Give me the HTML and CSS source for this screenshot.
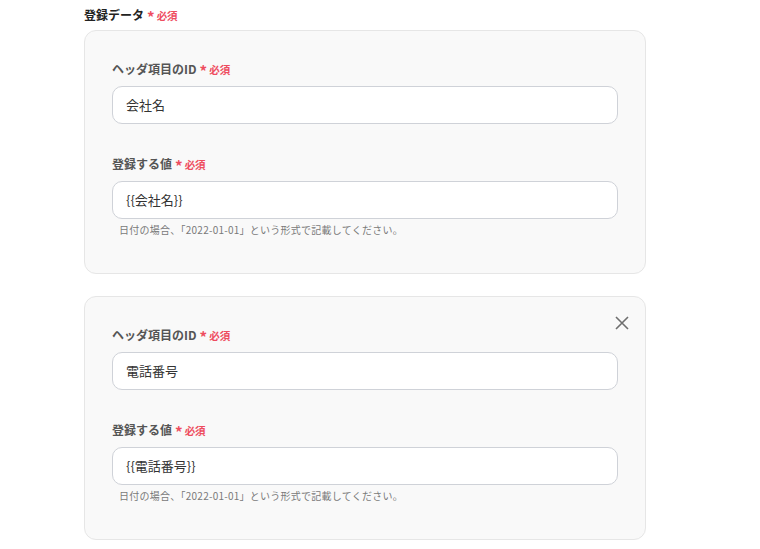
FILE: index.html
```html
<!DOCTYPE html>
<html lang="ja">
<head>
<meta charset="utf-8">
<link rel="stylesheet" href="styles.css">
</head>
<body>
<div class="page">
  <div class="title">登録データ<span class="req"><span class="ast">*</span>必須</span></div>

  <div class="card">
    <div class="field">
      <div class="label">ヘッダ項目のID<span class="req"><span class="ast">*</span>必須</span></div>
      <div class="input">会社名</div>
    </div>
    <div class="field">
      <div class="label">登録する値<span class="req"><span class="ast">*</span>必須</span></div>
      <div class="input">{{会社名}}</div>
      <div class="hint">日付の場合、「2022-01-01」という形式で記載してください。</div>
    </div>
  </div>

  <div class="card">
    <button class="close" aria-label="削除">
      <svg width="14" height="14" viewBox="0 0 14 14"><path d="M1 1L13 13M13 1L1 13" stroke="#6f6f6f" stroke-width="1.6" fill="none"/></svg>
    </button>
    <div class="field">
      <div class="label">ヘッダ項目のID<span class="req"><span class="ast">*</span>必須</span></div>
      <div class="input">電話番号</div>
    </div>
    <div class="field">
      <div class="label">登録する値<span class="req"><span class="ast">*</span>必須</span></div>
      <div class="input">{{電話番号}}</div>
      <div class="hint">日付の場合、「2022-01-01」という形式で記載してください。</div>
    </div>
  </div>
</div>
</body>
</html>
```

FILE: styles.css
```css
* { box-sizing: border-box; }
html, body { margin: 0; padding: 0; background: #fff; }
body {
  font-family: "Noto Sans CJK JP", "Noto Sans", sans-serif;
  color: #333;
}
.page {
  padding: 5px 0 0 84px;
  width: 646px;
}
.title {
  font-size: 12px;
  font-weight: bold;
  line-height: 20px;
  height: 20px;
  margin-bottom: 5px;
  color: #222;
}
.req {
  color: #ee4d5f;
  font-size: 10.5px;
  font-weight: bold;
  margin-left: 3px;
}
.ast {
  display: inline-block;
  font-size: 15px;
  line-height: 10px;
  margin-right: 2px;
  position: relative;
  top: 3px;
}
.card {
  position: relative;
  background: #f9f9f9;
  border: 1px solid #e6e6e6;
  border-radius: 12px;
  padding: 29px 27px 0 27px;
  height: 244px;
  margin-bottom: 22px;
}
.field + .field { margin-top: 31px; }
.label {
  font-size: 12px;
  font-weight: bold;
  line-height: 18px;
  height: 18px;
  color: #555;
  margin-bottom: 8px;
}
.input {
  height: 38px;
  background: #fff;
  border: 1px solid #cfd2d8;
  border-radius: 10px;
  padding: 0 13px;
  font-size: 13px;
  line-height: 36px;
  color: #333;
}
.hint {
  margin-top: 4px;
  padding-left: 7px;
  font-size: 10px;
  line-height: 14px;
  letter-spacing: 0.25px;
  color: #7a7a7a;
}
.close {
  position: absolute;
  top: 18px;
  right: 15px;
  width: 16px;
  height: 16px;
  padding: 1px;
  border: 0;
  background: transparent;
  display: flex;
  align-items: center;
  justify-content: center;
}
```
